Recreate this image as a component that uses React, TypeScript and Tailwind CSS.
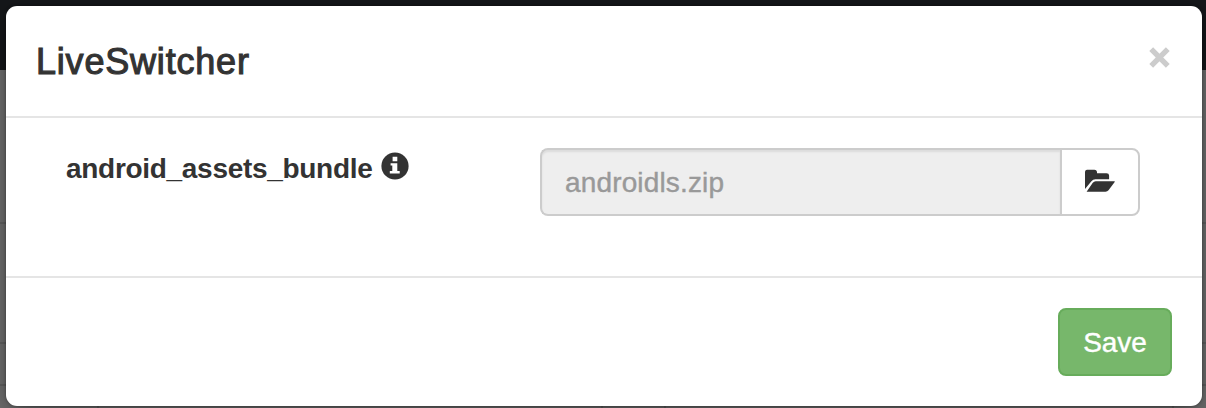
function InfoIcon() {
  return (
    <svg className="ml-[9px] h-[28px] w-[28px] shrink-0" viewBox="0 0 28 28" aria-hidden="true">
      <circle cx="14" cy="14" r="13.6" fill="#333" />
      <path d="M11.6 4.7h4.7v4.6h-4.7zM9.6 11.2h6.7v7.9h2.4v2.4H8.8v-2.4h2.5v-5.5H9.6z" fill="#fff" />
    </svg>
  );
}

function FolderIcon() {
  return (
    <svg className="h-[24px] w-[30px]" viewBox="0 0 30 24" fill="#333" aria-hidden="true">
      <path d="M0 20V2.7Q.3.9 2 .7h7.5q2 0 2.5 2V4.3h9.5q2.6 0 2.6 2.2v3.8H10.5Q8 10.3 6.2 12.5z" />
      <path d="M10.7 12.3H29.7q.2.5-.2 1l-6 8q-1.1 1.4-3 1.4H1.6l6.2-8.9q1.2-1.5 2.9-1.5z" />
    </svg>
  );
}

function CloseIcon() {
  return (
    <svg className="h-[21px] w-[21px]" viewBox="0 0 21 21" aria-hidden="true">
      <path d="M2.2 2.2 18.8 18.8M18.8 2.2 2.2 18.8" stroke="#ccc" strokeWidth="5.4" />
    </svg>
  );
}

function Backdrop() {
  return (
    <svg className="absolute inset-0 h-[408px] w-[1206px]" viewBox="0 0 1206 408" aria-hidden="true">
      <rect width="1206" height="408" fill="#717171" />
      <rect width="1206" height="70" fill="#15171a" />
      <path d="M0 223H1206M0 343H1206M0 385H1206M98 385V408M602 385V408M665 385V408M1173 385V408" stroke="#626262" strokeWidth="2" />
    </svg>
  );
}

export default function App() {
  return (
    <div className="relative h-[408px] w-[1206px] overflow-hidden font-['Liberation_Sans',Arial,sans-serif] text-[#333]">
      <Backdrop />
      <div className="relative pt-[6px] pl-[6px]">
        <section role="dialog" aria-label="LiveSwitcher" className="flex h-[400px] w-[1196px] flex-col rounded-[11px] bg-white shadow-[0_10px_30px_rgba(0,0,0,0.4),0_0_3px_rgba(0,0,0,0.4)]">
          <header className="flex h-[112px] shrink-0 items-start justify-between border-b-2 border-[#e5e5e5] pr-[32px] pl-[30px]">
            <h4 className="pt-[36px] text-[36px] leading-[40px] tracking-[0.8px] [-webkit-text-stroke:1.1px_#333]">LiveSwitcher</h4>
            <button type="button" aria-label="Close" className="mt-[41px]"><CloseIcon /></button>
          </header>
          <div className="flex h-[158px] shrink-0 items-start pt-[30px] pr-[62px] pl-[60px]">
            <label className="flex w-[474px] items-start pt-[4px] text-[28px] leading-[32px] font-bold">
              <span className="pt-px tracking-[-0.3px]">android_assets_bundle</span>
              <InfoIcon />
            </label>
            <div className="flex h-[68px] w-[600px]">
              <div className="flex flex-1 items-center rounded-l-[8px] border-2 border-r-0 border-[#ccc] bg-[#eee] pt-[2px] pl-[23px] text-[28px] tracking-[0.15px] text-[#999] [-webkit-text-stroke:0.4px_#999] shadow-[inset_0_2px_2px_rgba(0,0,0,0.075)]">androidls.zip</div>
              <button type="button" aria-label="Browse" className="flex w-[80px] items-center justify-center rounded-r-[8px] border-2 border-[#ccc] bg-white pb-[2px]"><FolderIcon /></button>
            </div>
          </div>
          <footer className="flex flex-1 items-start justify-end border-t-2 border-[#e5e5e5] pt-[30px] pr-[30px]">
            <button type="button" className="h-[68px] w-[114px] rounded-[8px] border-2 border-[#67ac5b] bg-[#77b76b] pt-[2px] text-[28px] tracking-[-0.1px] text-white [-webkit-text-stroke:0.4px_#fff]">Save</button>
          </footer>
        </section>
      </div>
    </div>
  );
}
